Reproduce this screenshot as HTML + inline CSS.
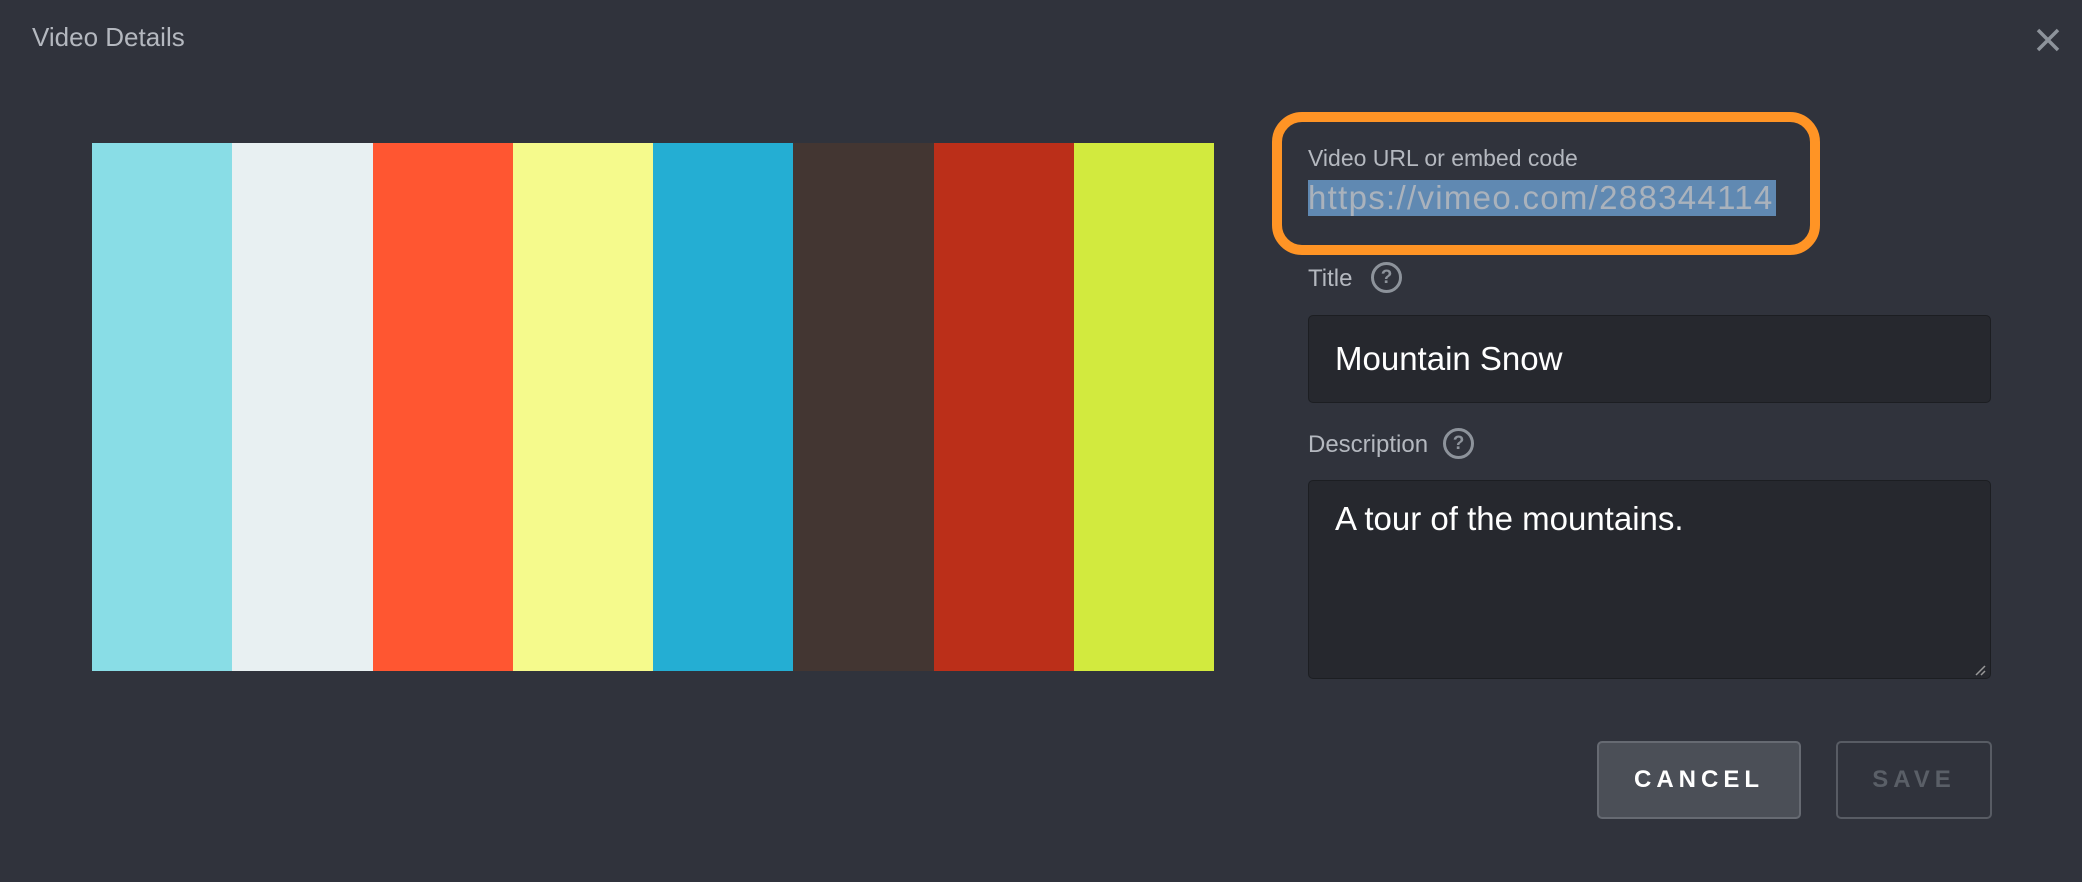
<!DOCTYPE html>
<html><head><style>
body{margin:0;width:2082px;height:882px;background:#30333c;font-family:"Liberation Sans",sans-serif;position:relative;overflow:hidden}
.a{position:absolute}
.q{position:absolute;width:25px;height:25px;border:3px solid #8d939b;border-radius:50%;color:#8d939b;font-size:19px;font-weight:bold;text-align:center;line-height:25px}
</style></head><body>
<div class="a" style="left:32px;top:22px;font-size:26px;color:#b4b8bf">Video Details</div>
<svg class="a" style="left:2034px;top:26px" width="28" height="28"><path d="M4 4L24 24M24 4L4 24" stroke="#8d939b" stroke-width="3.5"/></svg>
<div class="a" style="left:92px;top:143px;width:1122px;height:528px;display:flex">
<div style="flex:1;background:#89dde6"></div><div style="flex:1;background:#e8f0f2"></div><div style="flex:1;background:#ff5631"></div><div style="flex:1;background:#f5fa8c"></div><div style="flex:1;background:#24aed3"></div><div style="flex:1;background:#433632"></div><div style="flex:1;background:#bb2f19"></div><div style="flex:1;background:#d2ea3e"></div>
</div>
<div class="a" style="left:1272px;top:112px;width:528px;height:123px;border:10px solid #ff9425;border-radius:30px"></div>
<div class="a" style="left:1308px;top:145px;font-size:23px;color:#b4b8bf">Video URL or embed code</div>
<div class="a" style="left:1308px;top:180px;height:36px;width:468px;background:#6089b2;font-size:33px;line-height:36px;color:#aab2bc;white-space:nowrap;overflow:hidden;letter-spacing:1.3px">https://vimeo.com/288344114</div>
<div class="a" style="left:1308px;top:265px;font-size:24px;color:#b4b8bf">Title</div>
<div class="q" style="left:1371px;top:262px">?</div>
<div class="a" style="left:1308px;top:315px;width:681px;height:86px;background:#26282e;border:1px solid #1c1e22;border-radius:5px"></div>
<div class="a" style="left:1335px;top:340px;font-size:33px;color:#fff">Mountain Snow</div>
<div class="a" style="left:1308px;top:431px;font-size:24px;color:#b4b8bf">Description</div>
<div class="q" style="left:1443px;top:428px">?</div>
<div class="a" style="left:1308px;top:480px;width:681px;height:197px;background:#26282e;border:1px solid #1c1e22;border-radius:5px"></div>
<div class="a" style="left:1335px;top:500px;font-size:33px;color:#fff">A tour of the mountains.</div>
<svg class="a" style="left:1974px;top:664px" width="12" height="12"><path d="M2 11L11 2M7 11L11 7" stroke="#999" stroke-width="1.5"/></svg>
<div class="a" style="left:1597px;top:741px;width:200px;height:74px;background:#4b4f57;border:2px solid #666a72;border-radius:5px;color:#fff;font-weight:bold;font-size:24px;letter-spacing:5px;text-align:center;line-height:74px">CANCEL</div>
<div class="a" style="left:1836px;top:741px;width:152px;height:74px;border:2px solid #585c64;border-radius:5px;color:#5a5f67;font-weight:bold;font-size:24px;letter-spacing:5px;text-align:center;line-height:74px">SAVE</div>
</body></html>
